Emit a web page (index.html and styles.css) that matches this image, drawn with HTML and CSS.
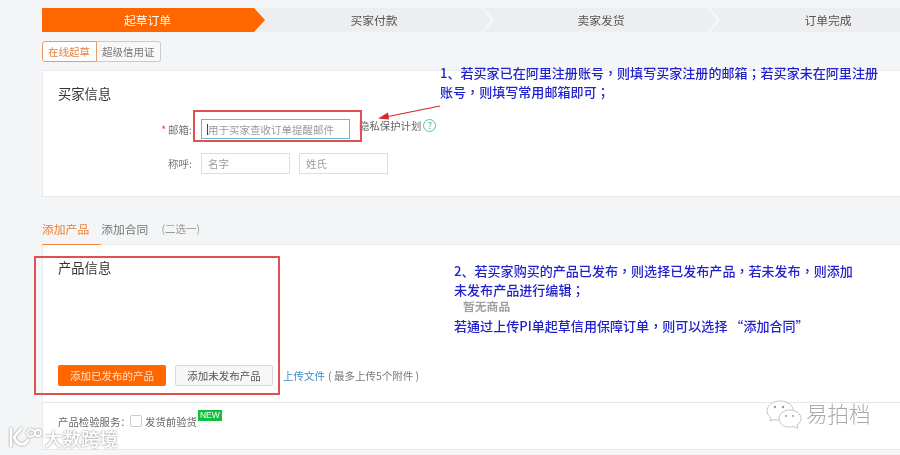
FILE: index.html
```html
<!DOCTYPE html>
<html lang="zh-CN">
<head>
<meta charset="utf-8">
<title>起草订单</title>
<link rel="stylesheet" href="styles.css">
</head>
<body>
<div class="page">
  <div class="steps">
    <div class="step step-active">起草订单</div>
    <div class="step step-b">买家付款</div>
    <div class="step step-c">卖家发货</div>
    <div class="step step-d">订单完成</div>
  </div>

  <div class="modes">
    <span class="mode mode-active">在线起草</span>
    <span class="mode">超级信用证</span>
  </div>

  <section class="card buyer">
    <h2 class="card-title">买家信息</h2>
    <div class="row row-email">
      <label class="row-label"><span class="req">*</span>邮箱:</label>
      <span class="field-email"><input class="input input-email" placeholder="用于买家查收订单提醒邮件"></span>
      <span class="privacy">隐私保护计划</span>
      <span class="help">?</span>
    </div>
    <div class="row row-name">
      <label class="row-label">称呼:</label>
      <input class="input input-name" placeholder="名字">
      <input class="input input-name" placeholder="姓氏">
    </div>
  </section>

  <nav class="tabs">
    <span class="tab tab-active">添加产品</span>
    <span class="tab">添加合同</span>
    <span class="tab-note">(二选一)</span>
  </nav>

  <section class="product">
    <div class="product-main">
      <h2 class="card-title">产品信息</h2>
      <p class="empty">暂无商品</p>
      <div class="actions">
        <button class="btn btn-primary">添加已发布的产品</button>
        <button class="btn btn-plain">添加未发布产品</button>
        <a class="upload">上传文件</a>
        <span class="upload-note">( 最多上传5个附件 )</span>
      </div>
    </div>
    <div class="inspect">
      <span class="inspect-label">产品检验服务：</span>
      <span class="check"></span>
      <span class="inspect-text">发货前验货</span>
      <span class="badge">NEW</span>
    </div>
  </section>
  <div class="tail"></div>
</div>

<div class="redbox redbox-email"></div>
<div class="redbox redbox-product"></div>

<svg class="arrow" width="70" height="20" viewBox="0 0 70 20">
  <path d="M64 2 L12 12.5" stroke="#d8262c" stroke-width="1.2" fill="none"/>
  <path d="M2 14.5 L12 8.5 L13 15.5 Z" fill="#d8262c"/>
</svg>

<div class="note note-one" lang="zh-TW"><span class="note-lead" lang="zh-CN">1、</span>若买家已在阿里注册账号，则填写买家注册的邮箱；若买家未在阿里注册<br>账号，则填写常用邮箱即可；</div>
<div class="note note-two" lang="zh-TW"><span class="note-lead" lang="zh-CN">2、</span>若买家购买的产品已发布，则选择已发布产品，若未发布，则添加<br>未发布产品进行编辑；</div>
<div class="note note-three" lang="zh-TW">若通过上传PI单起草信用保障订单，则可以选择 “添加合同”</div>

<div class="mark-left">
  <svg width="34" height="24" viewBox="0 0 34 24">
    <g fill="none" stroke="#fff" stroke-width="2.6" stroke-linecap="round">
      <path d="M3 3 V20"/>
      <path d="M13 3 L6 11 C9 19 16 21 20 14"/>
      <circle cx="23" cy="7" r="3.6" stroke-width="1.8"/>
      <circle cx="30" cy="7" r="3" stroke-width="1.8"/>
    </g>
  </svg>
  <span class="mark-left-text">大数跨境</span>
</div>

<div class="mark-right">
  <svg width="36" height="30" viewBox="0 0 36 30">
    <g fill="#fff" stroke="#bdbdbd" stroke-width="0.9">
      <path d="M14 1 C6 1 1 6 1 11 C1 14 3 16.500 5 18 L4 21 L8 19.500 C10 20 12 20 14 20 C22 20 27 15 27 10 C27 5 21 1 14 1 Z"/>
      <path d="M24 10 C17 10 13 14 13 18.500 C13 23 17 27 23 27 C25 27 26 27 28 26.500 L32 28.500 L31 25 C33.500 23.500 35 21 35 18.500 C35 14 30 10 24 10 Z"/>
    </g>
    <g fill="#9a9a9a">
      <circle cx="9" cy="7" r="1.200"/><circle cx="17" cy="7" r="1.200"/>
      <circle cx="20" cy="16" r="1"/><circle cx="27" cy="16" r="1"/>
    </g>
  </svg>
  <span class="mark-right-text">易拍档</span>
</div>
</body>
</html>
```
FILE: styles.css
```css
* { box-sizing: border-box; }
html { background: #f3f5f7; }
html, body { margin: 0; height: 455px; overflow: hidden; }
body {
  position: relative;
  width: 900px;
  background: #f3f5f7;
  font-family: "Noto Sans CJK SC", "Liberation Sans", sans-serif;
  color: #444;
  filter: blur(0.4px);
}
.page { padding: 8px 0 0 42px; }

.steps { display: flex; height: 24px; width: 858px; background: #edeef0; color: #555; font-size: 11.800px; line-height: 24px; text-align: center; }
.step { position: relative; flex: none; }
.step-active { width: 223px; padding-right: 12px; background: #ff6600; color: #fff; clip-path: polygon(0 0, 212px 0, 100% 50%, 212px 100%, 0 100%); }
.step-b { width: 229px; padding-right: 11px; }
.step-c { width: 226px; padding-right: 12px; }
.step-d { width: 180px; padding-left: 36px; margin-right: -36px; }
.step-b::after, .step-c::after {
  content: "";
  position: absolute;
  top: 0;
  right: 0;
  width: 12px;
  height: 24px;
  background: #f7f8f9;
  clip-path: polygon(0 0, 2px 0, 100% 50%, 2px 100%, 0 100%, 9px 50%);
}

.modes { display: flex; height: 21px; margin-top: 9px; font-size: 10.500px; line-height: 19px; color: #777; }
.mode { padding: 0 5px; border: 1px solid #c9cbce; border-left: 0; border-radius: 0 3px 3px 0; background: #f8f8f8; }
.mode-active { width: 55px; padding: 0 5px; border: 1px solid #eb9a66; border-radius: 3px 0 0 3px; background: #fff; color: #e8833f; }

.card { margin-top: 8px; height: 127px; padding: 13px 0 0 15px; background: #fff; border: 1px solid #e7e9ec; border-right: 0; }
.card-title { margin: 0; font-size: 13.300px; line-height: 19px; font-weight: 400; color: #333; }

.row { display: flex; align-items: center; }
.row-email { height: 20px; margin-top: 16px; }
.row-name { height: 21px; margin-top: 14px; }
.row-label { width: 134px; margin-right: 9px; font-size: 10.500px; text-align: right; color: #777; }
.req { margin-right: 2px; color: #e3483f; }
.input { display: block; height: 100%; padding: 0 6px; border: 1px solid #dcdee0; border-radius: 0; outline: 0; background: #fff; font: inherit; font-size: 10.500px; }
.input::placeholder { color: #9a9a9a; opacity: 1; }
.field-email { position: relative; display: block; width: 149px; height: 20px; }
.field-email::before { content: ""; position: absolute; left: 6px; top: 5px; width: 1px; height: 11px; background: #444; }
.input-email { width: 100%; border-color: #6cb8cc; }
.input-name { width: 89px; margin-right: 9px; }
.privacy { margin: -7px 2px 0 9px; font-size: 10.400px; color: #666; }
.help { width: 13px; height: 13px; margin-top: -7px; border: 1px solid #62c08a; border-radius: 50%; font-size: 9px; line-height: 11px; text-align: center; color: #43ad70; }

.tabs { display: flex; align-items: flex-start; height: 48px; padding-top: 22px; font-size: 11.800px; line-height: 20px; color: #777; border-bottom: 1px solid #e6e8eb; }
.tab { height: 26px; padding-right: 12px; }
.tab-active { color: #e9803a; border-bottom: 1px solid #ee8740; }
.tab-note { margin-left: 1px; font-size: 10.500px; color: #999; }

.product { background: #fff; border-left: 1px solid #e7e9ec; }
.product-main { height: 158px; padding: 13px 0 0 15px; border-bottom: 1px solid #e4e6e8; }
.empty { margin: 21px 0 0 405px; font-size: 11.800px; line-height: 16px; font-weight: 700; color: #a0a0a0; }
.actions { display: flex; align-items: center; height: 21px; margin-top: 51px; font-size: 10.500px; }
.btn { height: 21px; padding: 0; border-radius: 2px; font: inherit; }
.btn-primary { width: 108px; border: 0; background: #ff6600; color: #fbe3d0; }
.btn-plain { width: 98px; margin-left: 9px; border: 1px solid #d8d8d8; background: #f7f7f7; color: #555; }
.upload { margin-left: 10px; color: #3d8ac4; }
.upload-note { margin-left: 3px; color: #777; }

.inspect { display: flex; align-items: center; height: 47px; padding: 0 0 10px 15px; border-bottom: 1px solid #e6e8ea; font-size: 10.400px; color: #666; white-space: nowrap; }
.inspect-label { flex: none; width: 72px; }
.check { flex: none; width: 12px; height: 12px; margin-right: 3px; border: 1px solid #c8c8c8; border-radius: 2px; background: #fff; }
.badge { align-self: flex-start; margin: 7px 0 0 1px; padding: 0 2px; height: 11px; background: #12bf3c; color: #fff; font-family: "Liberation Sans", sans-serif; font-size: 8.500px; line-height: 11px; }
.tail { height: 6px; background: #f5f6f8; }

.redbox { position: absolute; border: 2px solid #e04f52; }
.redbox-email { left: 193px; top: 110px; width: 169px; height: 32px; }
.redbox-product { left: 34px; top: 256px; width: 246px; height: 139px; }
.arrow { position: absolute; left: 376px; top: 104px; }

.note { position: absolute; font-family: "Noto Sans CJK TC", "Noto Sans CJK SC", sans-serif; font-size: 13.060px; line-height: 19px; font-weight: 500; color: #2222cc; white-space: nowrap; }
.note-lead { font-family: "Noto Sans CJK SC", sans-serif; }
.note-one { left: 440px; top: 63px; }
.note-two { left: 454px; top: 261px; }
.note-three { left: 454px; top: 316px; }

.mark-left { position: absolute; left: 8px; top: 426px; display: flex; align-items: center; gap: 2px; filter: drop-shadow(0 0 1px #8d8d8d); }
.mark-left-text { font-size: 18.500px; line-height: 24px; font-weight: 500; color: #fff; }
.mark-right { position: absolute; left: 766px; top: 400px; display: flex; align-items: center; gap: 4px; }
.mark-right-text { margin-top: -4px; font-size: 21.500px; line-height: 30px; font-weight: 300; color: #a9a9a9; }
```
